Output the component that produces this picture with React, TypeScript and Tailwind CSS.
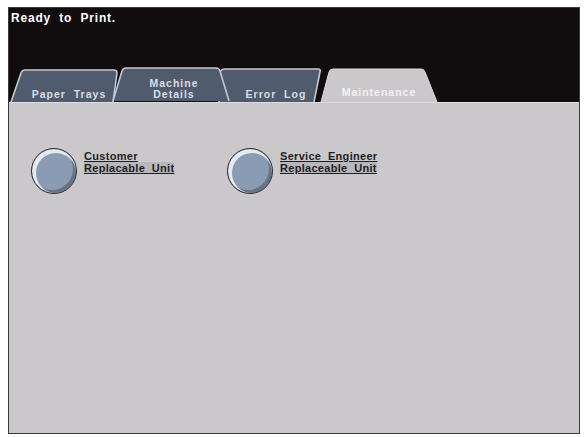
const FONT = { fontFamily: '"Liberation Sans", Arial, sans-serif' };

type TabProps = {
  w: number;
  top: number;
  path: string;
  active?: boolean;
  lines: string[];
  textClass: string;
  z: string;
  ml: string;
};

function Tab({ w, top, path, active, lines, textClass, z, ml }: TabProps) {
  return (
    <div className={`relative h-[35px] shrink-0 ${z} ${ml}`} style={{ width: w }}>
      <svg width={w} height={35} viewBox={`0 0 ${w} 35`} className="absolute inset-0">
        <path
          d={path}
          transform={`translate(0 ${top})`}
          fill={active ? "#cbc8cc" : "#505b6d"}
          stroke={active ? "#dcdadc" : "#c4c8d0"}
          strokeWidth={active ? 1 : 1.6}
        />
      </svg>
      <div
        className={`absolute inset-0 flex flex-col items-center justify-end pb-[2px] text-[10.5px] font-bold leading-[11px] tracking-[1px] ${textClass}`}
      >
        {lines.map((l) => (
          <span key={l} className="whitespace-pre">{l}</span>
        ))}
      </div>
    </div>
  );
}

function RoundButton({ line1, line2 }: { line1: string; line2: string }) {
  return (
    <div className="flex items-start gap-[7px]">
      <div className="w-[46px] h-[46px] rounded-full border-[1.5px] border-[#2c2c30] bg-[#8a9cb3] shadow-[inset_2px_2px_0_2px_rgba(245,247,250,0.85),inset_-2px_-2px_0_1px_rgba(40,40,50,0.35)]" />
      <div className="mt-[2px] flex flex-col text-[11px] font-bold leading-[12px] text-[#1e1e22] tracking-[0.3px]">
        <span className="underline decoration-1 underline-offset-[1px] whitespace-pre">{line1}</span>
        <span className="underline decoration-1 underline-offset-[1px] bg-[#b9b7bb] whitespace-pre">{line2}</span>
      </div>
    </div>
  );
}

export default function App() {
  return (
    <div className="w-[584px] h-[437px] bg-white pl-[8px] pt-[7px]" style={FONT}>
      <div className="w-[572px] h-[427px] border-[1.5px] border-[#3a3a3c] flex flex-col">
        <div className="h-[94px] bg-[#110d0f] flex flex-col justify-between">
          <div className="px-[2px] pt-[1px] text-[12px] font-bold text-white tracking-[0.8px] whitespace-pre">Ready  to  Print.</div>
          <div className="flex items-end">
            <Tab
              w={108}
              top={2}
              path="M1,33 L11,4 Q12,1 15,1 L104,1 Q107,1 107,4 L103,33"
              lines={["Paper  Trays"]}
              textClass="text-[#d9dde4] pl-[10px]"
              z="z-20"
              ml="ml-[1px]"
            />
            <Tab
              w={118}
              top={0}
              path="M1,34 L10,4 Q11,1 14,1 L104,1 Q107,1 108,4 L117,34"
              lines={["Machine", "Details"]}
              textClass="text-[#d9dde4] pl-[6px]"
              z="z-30"
              ml="-ml-[6px]"
            />
            <Tab
              w={104}
              top={1}
              path="M1,34 L2,4 Q3,1 7,1 L100,1 Q103,1 102,4 L96,34"
              lines={["Error  Log"]}
              textClass="text-[#d9dde4] pl-[12px]"
              z="z-10"
              ml="-ml-[12px]"
            />
            <Tab
              w={118}
              top={1}
              path="M1,34 L9,4 Q10,1 13,1 L101,1 Q104,1 105,4 L117,34"
              active
              lines={["Maintenance"]}
              textClass="text-[#f2f2f4] pb-[4px]"
              z="z-40"
              ml="-ml-[2px]"
            />
          </div>
        </div>
        <div className="flex-1 bg-[#cbc8cc] border-t border-[#dedcde] pl-[22px] pt-[45px]">
          <div className="flex">
            <div className="w-[196px]">
              <RoundButton line1="Customer" line2="Replacable  Unit" />
            </div>
            <RoundButton line1="Service  Engineer" line2="Replaceable  Unit" />
          </div>
        </div>
      </div>
    </div>
  );
}
